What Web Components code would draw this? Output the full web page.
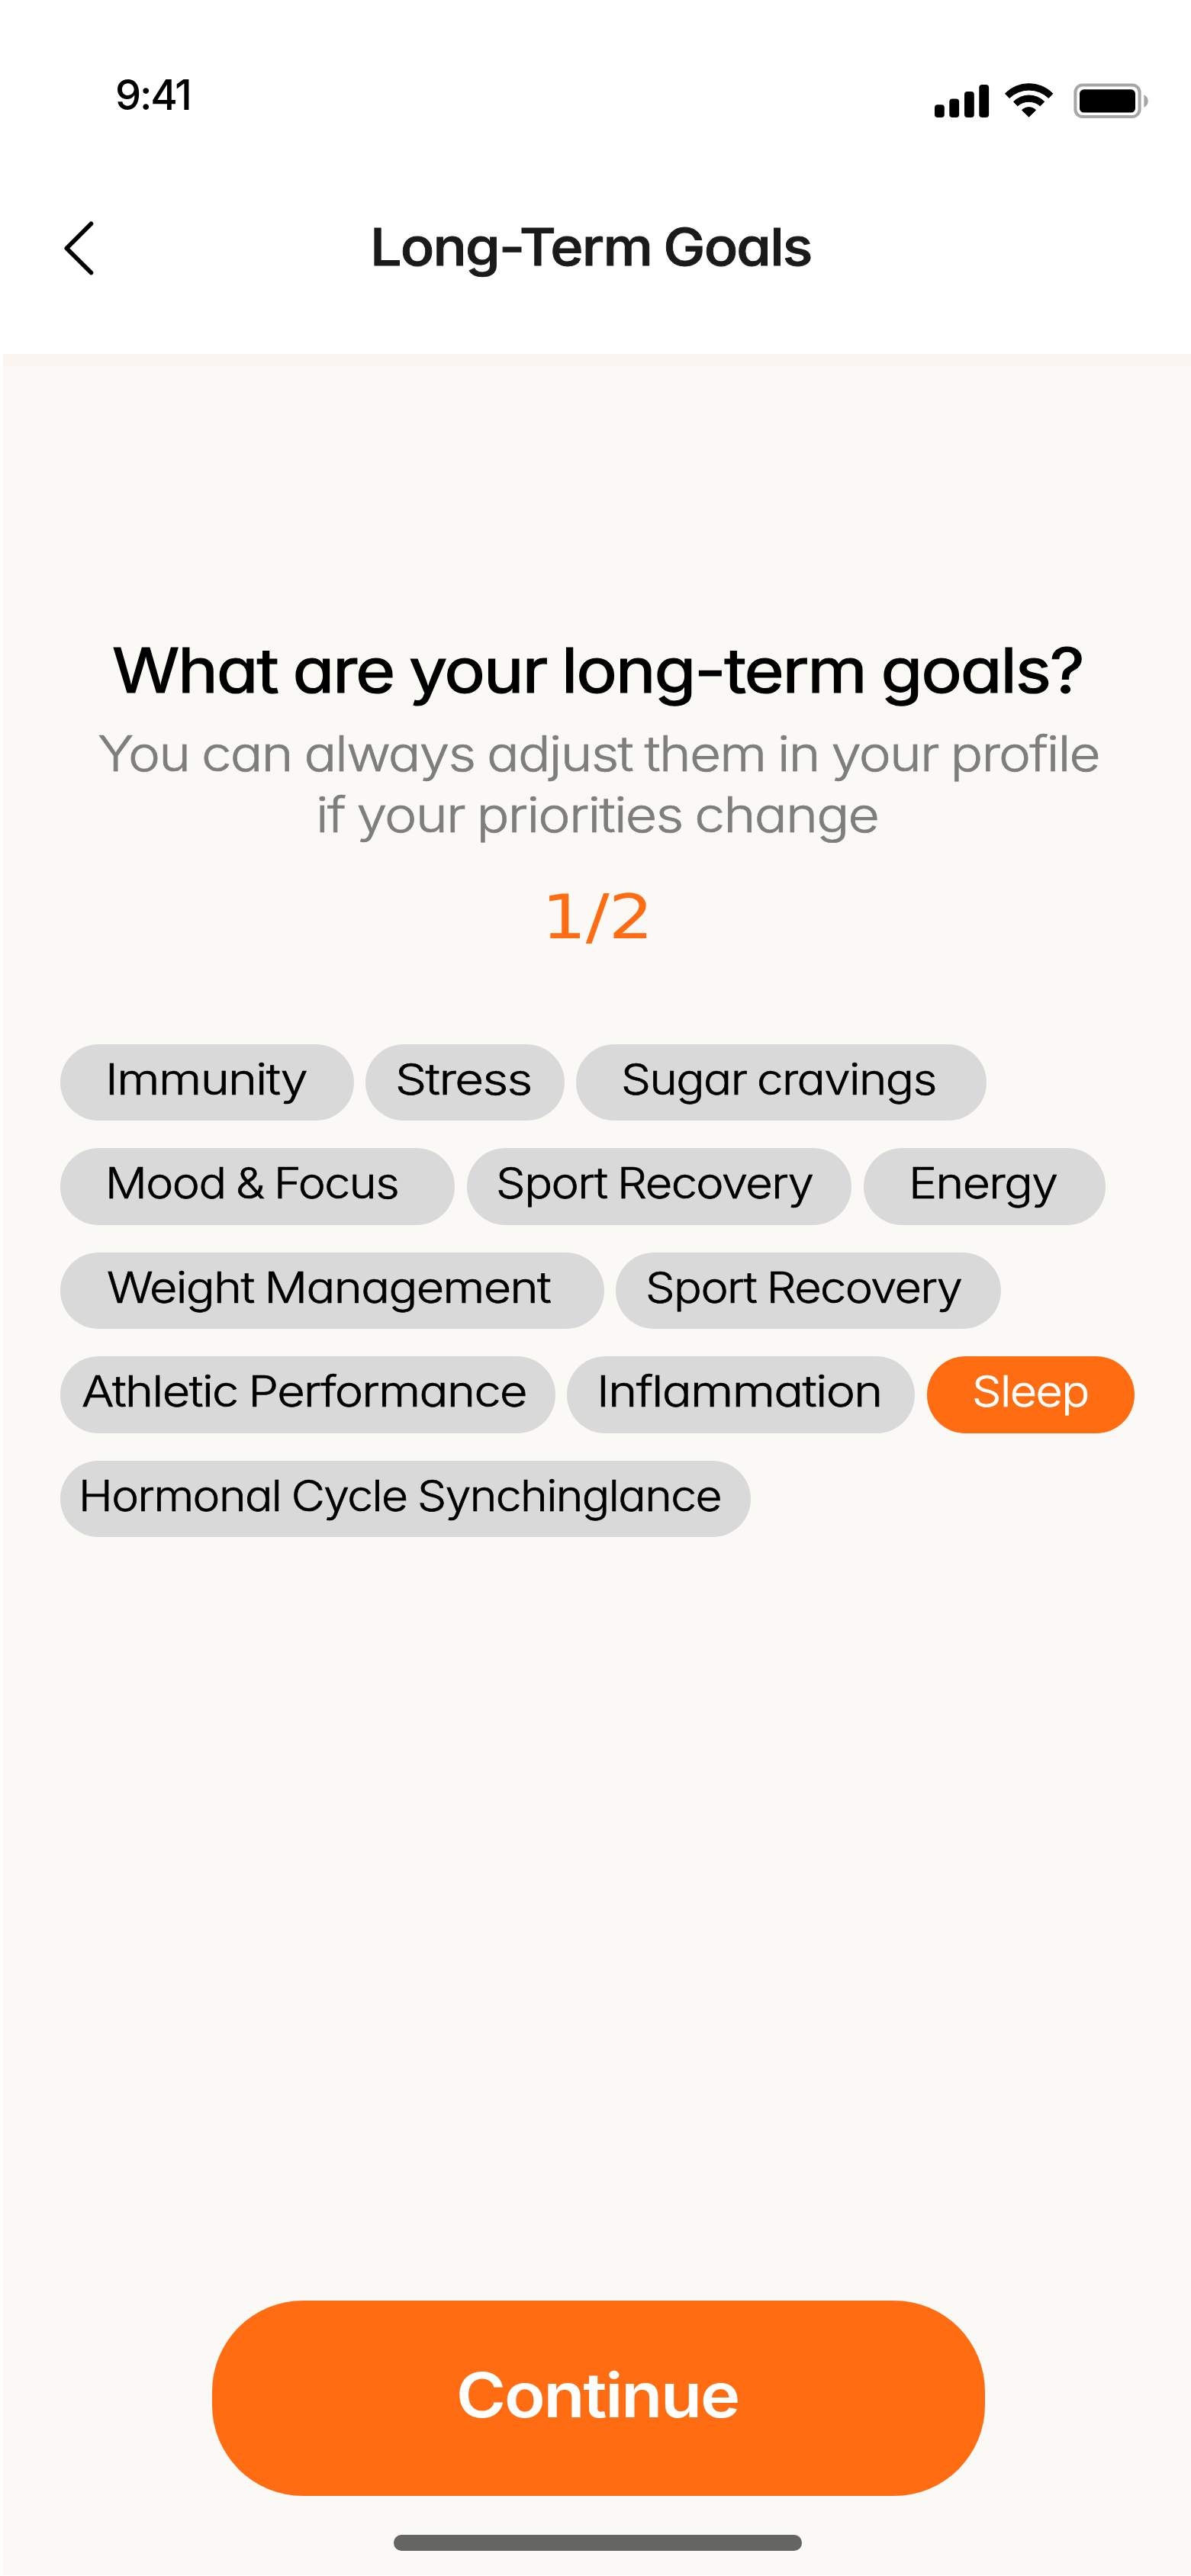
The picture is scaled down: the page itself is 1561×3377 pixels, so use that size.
<!DOCTYPE html>
<html lang="en">
<head>
<meta charset="utf-8">
<title>Long-Term Goals</title>
<style>
  html, body { margin: 0; background: #fff; }
  body { font-family: Inter, "Liberation Sans", sans-serif; color: #000; }
</style>
</head>
<body>
<goals-screen></goals-screen>
<script>
/* One line of text whose box is exactly the cap height. Letters get a fixed
   tracking (em) and are then widened or narrowed to a given ink width. */
class FitText extends HTMLElement {
  connectedCallback() {
    const root = this.attachShadow({ mode: 'open' });
    root.innerHTML = `<style>
      :host { display: block; flex: none; white-space: pre; line-height: .7273em; word-spacing: -.035em;
              font-feature-settings: "cv11" 1; font-variant-ligatures: no-common-ligatures; }
      span { display: inline-block; transform-origin: 0 50%; -webkit-text-stroke: var(--grade, 0) currentColor; }
    </style><span><slot></slot></span>`;
    const text = this.textContent;
    const target = parseFloat(this.getAttribute('w'));
    const cs = getComputedStyle(this);
    const size = parseFloat(cs.fontSize);
    const track = parseFloat(this.getAttribute('track') || '-0.025') * size;
    const ctx = document.createElement('canvas').getContext('2d');
    ctx.font = `${cs.fontWeight} ${size * 10}px ${cs.fontFamily}`;
    const first = ctx.measureText(text[0]);
    const last = ctx.measureText(text[text.length - 1]);
    const leftBearing = -first.actualBoundingBoxLeft / 10;
    const rightBearing = (last.width - last.actualBoundingBoxRight) / 10;
    const span = root.querySelector('span');
    const advance = span.getBoundingClientRect().width;
    const ink = advance - leftBearing - rightBearing + track * (text.length - 1);
    const k = target / ink;
    span.style.letterSpacing = track + 'px';
    span.style.transform = `scaleX(${k})`;
    span.style.marginLeft = -leftBearing * k + 'px';
    this.style.width = target + 'px';
  }
}
customElements.define('fit-text', FitText);

class StatusBar extends HTMLElement {
  connectedCallback() {
    this.attachShadow({ mode: 'open' }).innerHTML = `<style>
      :host { display: flex; justify-content: space-between; align-items: flex-start;
              box-sizing: border-box; height: 200px; padding: 105px 56px 0 154px; }
      fit-text { font-size: 54.5px; font-weight: 500; }
      svg { display: block; margin-top: 3px; }
    </style>
    <fit-text w="94.500" track="-0.04">9:41</fit-text>
    <svg width="280" height="48" viewBox="0 0 280 48">
      <rect x="0" y="29.3" width="12.8" height="16.7" rx="4"/>
      <rect x="19.3" y="21.5" width="12.8" height="24.5" rx="4"/>
      <rect x="39" y="12.1" width="12.8" height="33.9" rx="4"/>
      <rect x="58.3" y="3" width="12.8" height="43" rx="4"/>
      <g transform="translate(-45 -28) scale(.33333)" stroke="#000" stroke-width="3" stroke-linejoin="round">
        <path d="M412.500 128A131.500 131.500 0 0 1 599.500 128L583 145.500A110 110 0 0 0 429 145.500Z"/>
        <path d="M445.500 160A86 86 0 0 1 566.500 160L550 176.500A68 68 0 0 0 461 176.500Z"/>
        <path d="M478.500 193A38 38 0 0 1 532.500 193L505.500 219.500Z"/>
      </g>
      <rect x="184.400" y="3.600" width="84.200" height="41.300" rx="9.500" fill="none" stroke="#a6a6a6" stroke-width="4"/>
      <rect x="190" y="9.300" width="73" height="30.200" rx="5.500"/>
      <path d="M274.400 16.300C281.600 19.500 281.600 29.500 274.400 32.700Z" fill="#a6a6a6"/>
    </svg>`;
  }
}
customElements.define('status-bar', StatusBar);

class NavBar extends HTMLElement {
  connectedCallback() {
    this.attachShadow({ mode: 'open' }).innerHTML = `<style>
      :host { display: flex; align-items: flex-start; box-sizing: border-box; height: 264px; padding: 88px 0 0 80px; }
      svg { display: block; flex: none; }
      fit-text { margin: 10.500px 0 0 362.500px; font-size: 68px; font-weight: 500; color: #1a1a1a; --grade: .9px; }
    </style>
    <svg width="48" height="76" viewBox="0 0 48 76"><path d="M39.500 5.200L7.300 37.400L39.500 69.600" fill="none" stroke="#000" stroke-width="5.600" stroke-linecap="round" stroke-linejoin="round"/></svg>
    <fit-text w="572">Long-Term Goals</fit-text>`;
  }
}
customElements.define('nav-bar', NavBar);

class GoalChip extends HTMLElement {
  connectedCallback() {
    const a = n => this.getAttribute(n);
    this.attachShadow({ mode: 'open' }).innerHTML = `<style>
      :host { display: flex; flex: none; box-sizing: border-box; width: ${a('width')}px; height: 100.500px;
              padding: 25px 0 0 ${a('inset')}px; border-radius: 50.250px; background: #d9d9d9;
              font-size: 56.400px; font-weight: 300; color: #000; --grade: .7px; }
      :host([selected]) { background: #ff6c12; color: #fff; }
    </style><fit-text w="${a('ink')}">${a('label').replace('&', '&amp;')}</fit-text>`;
  }
}
customElements.define('goal-chip', GoalChip);

class GoalsScreen extends HTMLElement {
  connectedCallback() {
    this.attachShadow({ mode: 'open' }).innerHTML = `<style>
      :host { display: flex; flex-direction: column; width: 1561px; height: 3377px; overflow: hidden; background: #fff; }
      main { flex: 1; margin: 0 0 1px 4px; box-sizing: border-box; border-top: 16px solid #fcf6f3;
             background: #faf9f5; display: flex; flex-direction: column; align-items: flex-start; }
      h1, p, button { margin: 0; font: inherit; }
      h1 { margin: 370px 0 0 144px; font-size: 80.600px; font-weight: 400; --grade: 1.200px; }
      .sub { display: flex; flex-direction: column; gap: 33.500px; margin: 56.500px 0 0 125px;
             font-size: 64px; font-weight: 300; color: #7e7e7b; --grade: .7px; }
      .sub fit-text + fit-text { margin-left: 289.500px; }
      .step { margin: 81px 0 0 716px; font-family: "DejaVu Sans", sans-serif; font-size: 80.600px; color: #ff6c12; }
      .rows { display: flex; flex-direction: column; gap: 36px; margin: 137.500px 0 0 75.300px; }
      .row { display: flex; gap: 15.700px; }
      button { display: flex; justify-content: center; box-sizing: border-box; margin: 1000.500px 0 0 274px;
               width: 1013px; height: 256.500px; padding: 95px 0 0; border: 0; border-radius: 119px;
               background: #ff6c12; color: #fff; font-size: 81px; font-weight: 600; text-align: left; }
      .home { margin: 50.800px 0 0 511.700px; width: 535.500px; height: 20.400px; border-radius: 10.200px; background: #656562; }
    </style>
    <status-bar></status-bar>
    <nav-bar></nav-bar>
    <main>
      <h1><fit-text w="1269.500">What are your long-term goals?</fit-text></h1>
      <p class="sub"><fit-text w="1310">You can always adjust them in your profile</fit-text><fit-text w="731">if your priorities change</fit-text></p>
      <p class="step"><fit-text w="128" track="-0.01">1/2</fit-text></p>
      <div class="rows">
        <div class="row">
          <goal-chip width="384.300" inset="64.500" ink="258" label="Immunity"></goal-chip>
          <goal-chip width="260.500" inset="42.500" ink="173" label="Stress"></goal-chip>
          <goal-chip width="537.200" inset="62.700" ink="407.500" label="Sugar cravings"></goal-chip>
        </div>
        <div class="row">
          <goal-chip width="517" inset="64.500" ink="377" label="Mood &amp; Focus"></goal-chip>
          <goal-chip width="504.300" inset="42.300" ink="411.500" label="Sport Recovery"></goal-chip>
          <goal-chip width="316.900" inset="65" ink="188.500" label="Energy"></goal-chip>
        </div>
        <div class="row">
          <goal-chip width="712.300" inset="62" ink="580.700" label="Weight Management"></goal-chip>
          <goal-chip width="504.300" inset="43" ink="410.500" label="Sport Recovery"></goal-chip>
        </div>
        <div class="row">
          <goal-chip width="648.300" inset="29" ink="580.500" label="Athletic Performance"></goal-chip>
          <goal-chip width="456.200" inset="45" ink="364.500" label="Inflammation"></goal-chip>
          <goal-chip selected width="272.300" inset="63" ink="147" label="Sleep"></goal-chip>
        </div>
        <div class="row">
          <goal-chip width="904.300" inset="29.500" ink="835" label="Hormonal Cycle Synchinglance"></goal-chip>
        </div>
      </div>
      <button><fit-text w="365.500">Continue</fit-text></button>
      <div class="home"></div>
    </main>`;
  }
}
customElements.define('goals-screen', GoalsScreen);
</script>
</body>
</html>
